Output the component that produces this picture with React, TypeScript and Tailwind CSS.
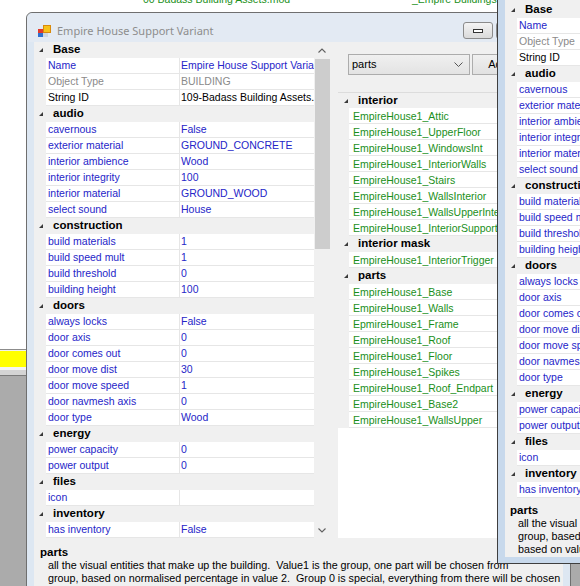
import React from "react";

type Col = "blue" | "gray" | "black";
type Prop = { n: string; v?: string; c?: Col };
type Cat = { t: string; props: Prop[] };

const cats: Cat[] = [
  {
    t: "Base",
    props: [
      { n: "Name", v: "Empire House Support Variant", c: "blue" },
      { n: "Object Type", v: "BUILDING", c: "gray" },
      { n: "String ID", v: "109-Badass Building Assets.mod", c: "black" },
    ],
  },
  {
    t: "audio",
    props: [
      { n: "cavernous", v: "False" },
      { n: "exterior material", v: "GROUND_CONCRETE" },
      { n: "interior ambience", v: "Wood" },
      { n: "interior integrity", v: "100" },
      { n: "interior material", v: "GROUND_WOOD" },
      { n: "select sound", v: "House" },
    ],
  },
  {
    t: "construction",
    props: [
      { n: "build materials", v: "1" },
      { n: "build speed mult", v: "1" },
      { n: "build threshold", v: "0" },
      { n: "building height", v: "100" },
    ],
  },
  {
    t: "doors",
    props: [
      { n: "always locks", v: "False" },
      { n: "door axis", v: "0" },
      { n: "door comes out", v: "0" },
      { n: "door move dist", v: "30" },
      { n: "door move speed", v: "1" },
      { n: "door navmesh axis", v: "0" },
      { n: "door type", v: "Wood" },
    ],
  },
  {
    t: "energy",
    props: [
      { n: "power capacity", v: "0" },
      { n: "power output", v: "0" },
    ],
  },
  { t: "files", props: [{ n: "icon", v: "" }] },
  { t: "inventory", props: [{ n: "has inventory", v: "False" }] },
];

const parts: { t: string; items: string[] }[] = [
  {
    t: "interior",
    items: [
      "EmpireHouse1_Attic",
      "EmpireHouse1_UpperFloor",
      "EmpireHouse1_WindowsInt",
      "EmpireHouse1_InteriorWalls",
      "EmpireHouse1_Stairs",
      "EmpireHouse1_WallsInterior",
      "EmpireHouse1_WallsUpperInterior",
      "EmpireHouse1_InteriorSupport",
    ],
  },
  { t: "interior mask", items: ["EmpireHouse1_InteriorTrigger"] },
  {
    t: "parts",
    items: [
      "EmpireHouse1_Base",
      "EmpireHouse1_Walls",
      "EpmireHouse1_Frame",
      "EmpireHouse1_Roof",
      "EmpireHouse1_Floor",
      "EmpireHouse1_Spikes",
      "EmpireHouse1_Roof_Endpart",
      "EmpireHouse1_Base2",
      "EmpireHouse1_WallsUpper",
    ],
  },
];

const colorCls: Record<Col, string> = {
  blue: "text-[#2525c8]",
  gray: "text-[#8a8a8a]",
  black: "text-black",
};

const descLines = [
  "all the visual entities that make up the building.  Value1 is the group, one part will be chosen from",
  "group, based on normalised percentage in value 2.  Group 0 is special, everything from there will be chosen",
  "based on value 3.",
];

function Tri() {
  return (
    <svg width="4" height="4" viewBox="0 0 4 4" className="block shrink-0">
      <polygon points="4,0 4,4 0,4" fill="#3a3a3a" />
    </svg>
  );
}

function Header({ t, wide, top }: { t: string; wide?: boolean; top?: boolean }) {
  return (
    <div
      className={
        top
          ? "h-[16px] shrink-0 flex items-center bg-[#f0f0f0] border-t border-[#dcdcdc]"
          : "h-[16px] shrink-0 flex items-center bg-[#f0f0f0]"
      }
    >
      <div
        className={
          wide
            ? "w-[20px] pl-[6px] shrink-0 flex items-center"
            : "w-[19px] pl-[5px] shrink-0 flex items-center"
        }
      >
        <Tri />
      </div>
      <span className="font-bold text-[11.5px] leading-none text-black whitespace-nowrap">{t}</span>
    </div>
  );
}

function PropRow({ p, nameW }: { p: Prop; nameW: "main" | "side" }) {
  const c = colorCls[p.c ?? "blue"];
  return (
    <div className="h-[16px] shrink-0 flex">
      <div className="w-[12px] shrink-0 bg-[#f0f0f0]" />
      <div className="flex-1 flex bg-white border-b border-[#e6e6e6] min-w-0">
        <div
          className={`${nameW === "main" ? "w-[134px]" : "w-[140px]"} shrink-0 border-r border-[#e6e6e6] pl-[2px] flex items-center overflow-hidden whitespace-nowrap text-[10.5px] leading-none ${c}`}
        >
          {p.n}
        </div>
        <div
          className={`flex-1 pl-[1px] flex items-center overflow-hidden whitespace-nowrap text-[10.5px] leading-none ${c}`}
        >
          {p.v}
        </div>
      </div>
    </div>
  );
}

function Grid({ kind }: { kind: "main" | "side" }) {
  return (
    <div className="flex flex-col">
      {cats.map((cat) => (
        <React.Fragment key={cat.t}>
          <Header t={cat.t} wide={kind === "side"} />
          {cat.props.map((p) => (
            <PropRow key={p.n} p={p} nameW={kind} />
          ))}
        </React.Fragment>
      ))}
    </div>
  );
}

function Desc({ side }: { side?: boolean }) {
  return (
    <div
      className={
        side
          ? "bg-[#f0f0f0] h-[59px] shrink-0 pt-[6px] pl-[5px] text-[10.75px] leading-[13px] text-black overflow-hidden"
          : "bg-[#f0f0f0] flex-1 pt-[5px] pl-[6px] text-[10.75px] leading-[13px] text-black overflow-hidden"
      }
    >
      <div className="font-bold text-[11.5px]">parts</div>
      {descLines.map((l) => (
        <div key={l} className="pl-[8px] whitespace-pre">
          {l}
        </div>
      ))}
    </div>
  );
}

function Chevron({ up }: { up?: boolean }) {
  return (
    <svg width="8" height="5" viewBox="0 0 8 5" className="block">
      <polyline
        points={up ? "0.5,4.5 4,1 7.5,4.5" : "0.5,0.5 4,4 7.5,0.5"}
        fill="none"
        stroke="#606060"
        strokeWidth="1.1"
      />
    </svg>
  );
}

function AppIcon() {
  return (
    <svg width="14" height="14" viewBox="0 0 14 14" className="block">
      <rect x="6.5" y="1.5" width="7" height="7" fill="#f7c21a" stroke="#d98a0c" />
      <rect x="1" y="5" width="5" height="4" fill="#e23a2c" />
      <rect x="1" y="9" width="5" height="4" fill="#2f6fd0" />
      <rect x="6" y="9" width="5" height="4" fill="#cfd6de" />
    </svg>
  );
}

export default function App() {
  return (
    <div className="relative w-[580px] h-[586px] overflow-hidden bg-white font-['Liberation_Sans',Arial,sans-serif]">
      {/* background application */}
      <div className="absolute inset-0 flex flex-col">
        <div className="h-[350px] shrink-0 bg-white border-b border-[#8c8c8c]">
          <div className="grid grid-cols-[143px_269px_auto] -mt-[7px] leading-[13px] text-[10.5px] text-[#1a8f1a] whitespace-nowrap">
            <span />
            <span>00 Badass Building Assets.mod</span>
            <span>_Empire Buildings</span>
          </div>
        </div>
        <div className="h-[1px] bg-[#f0f0f0]" />
        <div className="h-[16px] bg-[#ffff00]" />
        <div className="h-[3px] bg-[#f4f4f4]" />
        <div className="h-[6px] bg-[#d4d4d4] border-b border-[#7a7a7a]" />
        <div className="flex-1 bg-[#ababab]" />
      </div>

      {/* main dialog */}
      <div className="absolute left-[26px] top-[12px] w-[545px] h-[600px] rounded-t-[6px] border border-[#6f6f6f] bg-[#dde7f2] flex flex-col">
        <div className="h-[29px] shrink-0 flex items-start pl-[10px] pr-[2px] rounded-t-[6px] bg-[#e3eaf3]">
          <div className="mt-[11px]">
            <AppIcon />
          </div>
          <span className="mt-[10px] ml-[6px] text-[11px] leading-[16px] text-[#8d8d8d] font-['Noto_Sans',sans-serif] whitespace-nowrap">
            Empire House Support Variant
          </span>
          <div className="ml-auto mt-[9px] flex gap-[3px]">
            <div className="w-[30px] h-[17px] rounded-[3px] border border-[#8b8b8b] bg-gradient-to-b from-[#f4f4f4] to-[#dadada] flex items-center justify-center">
              <div className="w-[10px] h-[4px] border border-[#333] bg-white" />
            </div>
            <div className="w-[26px] h-[17px] rounded-[3px] border border-[#8b8b8b] bg-gradient-to-b from-[#f4f4f4] to-[#dadada]" />
            <div className="w-[43px] h-[17px] rounded-[3px] border border-[#8b8b8b] bg-gradient-to-b from-[#f4f4f4] to-[#dadada]" />
          </div>
        </div>

        <div className="flex-1 mx-[7px] flex flex-col bg-[#f0f0f0]">
          <div className="h-[497px] shrink-0 flex">
            <div className="w-[280px] shrink-0 bg-[#f0f0f0]">
              <Grid kind="main" />
            </div>
            {/* scrollbar */}
            <div className="w-[16px] shrink-0 flex flex-col items-center bg-[#f0f0f0]">
              <div className="h-[17px] w-full flex items-center justify-center">
                <Chevron up />
              </div>
              <div className="h-[190px] w-[15px] ml-[1px] bg-[#cdcdcd]" />
              <div className="flex-1" />
              <div className="h-[17px] w-full flex items-center justify-center pb-[1px]">
                <Chevron />
              </div>
            </div>
            {/* middle panel */}
            <div className="flex-1 min-w-0 flex flex-col">
              <div className="pt-[12px] pl-[18px] flex gap-[2px]">
                <div className="w-[122px] h-[21px] border border-[#acacac] bg-gradient-to-b from-[#f0f0f0] to-[#e3e3e3] flex items-center pl-[3px] pr-[6px] text-[11px] text-black">
                  <span>parts</span>
                  <svg width="9" height="5" viewBox="0 0 9 5" className="ml-auto block">
                    <polyline points="0.5,0.5 4.5,4.5 8.5,0.5" fill="none" stroke="#555" strokeWidth="1" />
                  </svg>
                </div>
                <div className="w-[52px] h-[21px] border border-[#adadad] bg-gradient-to-b from-[#f0f0f0] to-[#e1e1e1] flex items-center justify-center text-[11px] text-black">
                  Add
                </div>
              </div>
              <div className="mt-[17px] ml-[8px] mr-[8px] mb-[1px] flex-1 bg-white flex flex-col overflow-hidden">
                {parts.map((g, gi) => (
                  <React.Fragment key={g.t}>
                    <Header t={g.t} wide top={gi === 0} />
                    {g.items.map((it) => (
                      <div key={it} className="h-[16px] flex shrink-0">
                        <div className="w-[11px] shrink-0 bg-[#f0f0f0]" />
                        <div className="flex-1 bg-white border-b border-[#e6e6e6] pl-[4px] pt-[1px] flex items-center whitespace-nowrap overflow-hidden text-[10.5px] leading-none text-[#1a8f1a]">
                          {it}
                        </div>
                      </div>
                    ))}
                  </React.Fragment>
                ))}
              </div>
            </div>
          </div>
          <div className="h-[2px] shrink-0" />
          <Desc />
        </div>
      </div>

      {/* right window (on top) */}
      <div className="absolute left-[497px] top-0 w-[200px] h-[564px] border-l border-b border-[#3f3f3f] bg-[#c8d9ec] pl-[7px] pb-[6px] flex flex-col">
        <div className="flex-1 flex flex-col bg-[#f0f0f0] pt-[2px]">
          <Grid kind="side" />
          <Desc side />
        </div>
      </div>
    </div>
  );
}
